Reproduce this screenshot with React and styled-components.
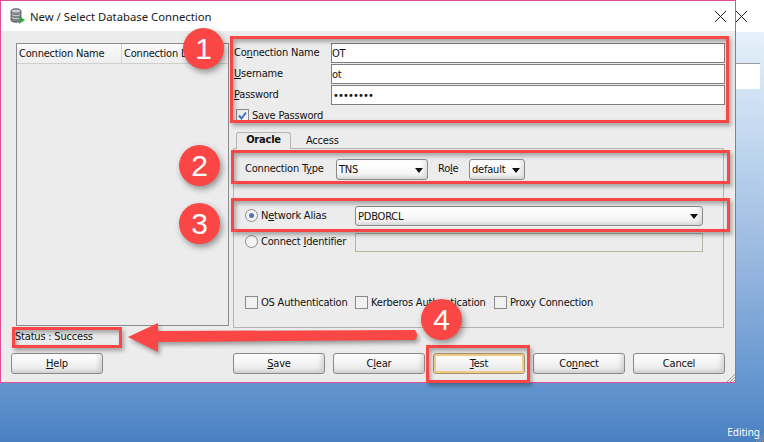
import React from "react";
import styled, { createGlobalStyle } from "styled-components";
import { X } from "lucide-react";

const GlobalStyle = createGlobalStyle`
  html, body {
    margin: 0;
    padding: 0;
    overflow: hidden;
  }
  * {
    box-sizing: border-box;
  }
  u {
    text-underline-offset: 1px;
    text-decoration-thickness: 1px;
  }
`;

const Desktop = styled.div`
  position: relative;
  width: 764px;
  height: 442px;
  display: flex;
  flex-direction: column;
  overflow: hidden;
  font-family: "DejaVu Sans Condensed", "Liberation Sans", sans-serif;
  font-size: 11px;
  letter-spacing: -0.2px;
  color: #111;
  background: linear-gradient(180deg, #e6f1fb 30px, #c5daf0 130px, #9ab9e0 255px, #6495cf 383px, #4a80c2 442px);
`;

const BackBar = styled.div`
  height: 32px;
  background: #fff;
  display: flex;
  justify-content: flex-end;
  align-items: center;
  padding-right: 12px;
`;

const BackField = styled.div`
  width: 25px;
  height: 26px;
  margin: 31px 4px 0 auto;
  background: #fff;
  border-top: 1px solid #9a9a9a;
`;

const EditingText = styled.div`
  margin-top: auto;
  align-self: flex-end;
  padding: 0 4px 2px 0;
  color: #fff;
  font-family: "Noto Sans", sans-serif;
  font-size: 10px;
  letter-spacing: 0;
  line-height: 16px;
`;

const Dialog = styled.div`
  position: absolute;
  left: 0;
  top: 0;
  width: 736px;
  height: 383px;
  display: flex;
  flex-direction: column;
  background: #ececec;
  border: 1px solid #de4f98;
`;

const TitleBar = styled.div`
  height: 30px;
  flex: none;
  display: flex;
  align-items: center;
  gap: 4px;
  padding: 0 4px 0 9px;
  background: #fff;
  font-family: "Noto Sans", sans-serif;
  font-size: 11.3px;
  letter-spacing: 0;
  color: #1a1a1a;
`;

const TitleText = styled.span`
  flex: 1;
`;

const Main = styled.div`
  display: grid;
  grid-template-columns: 213px 491px;
  gap: 4px;
  height: 296px;
  flex: none;
  padding: 12px 0 0 15px;
`;

const ConnTable = styled.div`
  border: 1px solid #8c8c8c;
  height: 283px;
`;

const TableHead = styled.div`
  display: grid;
  grid-template-columns: 105px 1fr;
  height: 20px;
  background: linear-gradient(180deg, #fafafa, #eeeeee);
  border-bottom: 1px solid #cfcfcf;
`;

const HeadCell = styled.div`
  padding-left: 2px;
  line-height: 20px;
  white-space: nowrap;
  overflow: hidden;
  border-right: ${(p) => (p.$last ? "none" : "1px solid #cfcfcf")};
`;

const RightCol = styled.div`
  display: flex;
  flex-direction: column;
`;

const FormGrid = styled.div`
  display: grid;
  grid-template-columns: 97px 394px;
  grid-auto-rows: 20px;
  row-gap: 1px;
  align-items: center;
  padding-left: 1px;
`;

const FieldLabel = styled.span`
  margin-top: -2px;
  white-space: nowrap;
`;

const FieldInput = styled.input`
  width: 100%;
  height: 20px;
  padding: 0;
  margin: 0;
  border: 1px solid #7f7f7f;
  background: #fff;
  outline: none;
  font: inherit;
  letter-spacing: inherit;
  color: #111;
`;

const PasswordInput = styled(FieldInput)`
  padding-left: 1px;
  letter-spacing: -0.85px;
`;

const CheckRow = styled.label`
  display: flex;
  align-items: center;
  gap: 3px;
  white-space: nowrap;
`;

const SaveRow = styled(CheckRow)`
  margin: 4px 0 0 3px;
  height: 13px;
`;

const CheckBox = styled.span`
  width: 13px;
  height: 13px;
  flex: none;
  display: flex;
  align-items: center;
  justify-content: center;
  border: 1px solid #8a8a8a;
  background: ${(p) => (p.$checked ? "linear-gradient(135deg, #e6e6e6, #fafafa)" : "#f1f1f1")};
`;

const TabStrip = styled.div`
  display: flex;
  align-items: flex-end;
  height: 17px;
  margin-top: 9px;
  padding-left: 3px;
`;

const Tab = styled.div`
  height: ${(p) => (p.$active ? "17px" : "14px")};
  width: ${(p) => (p.$active ? "55px" : "auto")};
  margin-left: ${(p) => (p.$active ? "0" : "15px")};
  margin-bottom: ${(p) => (p.$active ? "-1px" : "0")};
  text-align: center;
  font-weight: ${(p) => (p.$active ? 700 : 400)};
  line-height: ${(p) => (p.$active ? "13px" : "14px")};
  background: #ececec;
  border: ${(p) => (p.$active ? "1px solid #b5b5ad" : "none")};
  border-bottom: none;
  border-radius: 3px 3px 0 0;
  z-index: 1;
`;

const Panel = styled.div`
  height: 180px;
  display: flex;
  flex-direction: column;
  padding: 10px 0 0 11px;
  border: 1px solid #b5b5ad;
`;

const TypeRow = styled.div`
  display: flex;
  align-items: center;
  height: 21px;
`;

const RowLabel = styled.span`
  white-space: nowrap;
  width: ${(p) => p.$w}px;
  margin-left: ${(p) => p.$ml || 0}px;
  margin-top: -2px;
  flex: none;
`;

const Select = styled.div`
  position: relative;
  display: flex;
  align-items: center;
  width: ${(p) => p.$w}px;
  height: ${(p) => p.$h || 21}px;
  flex: none;
  padding-left: 2px;
  border: 1px solid #8a8a8a;
  border-radius: 3px;
  background: linear-gradient(180deg, #ffffff, #f8f8f8 60%, #ececec);
  box-shadow: inset -3px -2px 4px rgba(0, 0, 0, 0.1);

  &::after {
    content: "";
    position: absolute;
    right: 4px;
    top: 50%;
    margin-top: -2px;
    border-left: 4px solid transparent;
    border-right: 4px solid transparent;
    border-top: 5px solid #111;
  }
`;

const RadioRow = styled.div`
  display: flex;
  align-items: center;
  height: ${(p) => p.$h}px;
  margin-top: ${(p) => p.$mt}px;
`;

const Radio = styled.span`
  width: 13px;
  height: 13px;
  flex: none;
  margin-right: 3px;
  margin-top: -2px;
  display: flex;
  align-items: center;
  justify-content: center;
  border: 1px solid #8a8a8a;
  border-radius: 50%;
  background: #f4f4f4;

  &::after {
    content: "";
    display: ${(p) => (p.$on ? "block" : "none")};
    width: 5px;
    height: 5px;
    border-radius: 50%;
    background: #4a73c4;
  }
`;

const DisabledField = styled.div`
  width: 348px;
  height: 19px;
  flex: none;
  border: 1px solid #b5b5a0;
  background: #ececec;
`;

const AuthRow = styled.div`
  display: flex;
  align-items: center;
  height: 14px;
  margin-top: 43px;
`;

const AuthItem = styled(CheckRow)`
  width: ${(p) => p.$w}px;
  flex: none;
`;

const StatusRow = styled.div`
  height: 26px;
  flex: none;
  padding: 3px 0 0 14px;
  line-height: 14px;
`;

const Footer = styled.div`
  display: flex;
  padding-left: 10px;
`;

const Button = styled.button`
  width: 92px;
  height: 21px;
  margin: 0 8px 0 0;
  margin-left: ${(p) => p.$ml || 0}px;
  padding: 0;
  font: inherit;
  letter-spacing: inherit;
  color: #111;
  border: 1px solid ${(p) => (p.$focus ? "#a8946c" : "#8a8a8a")};
  border-radius: 3px;
  background: linear-gradient(180deg, #ffffff, #f3f3f3 50%, #e6e6e6);
  box-shadow: ${(p) =>
    p.$focus
      ? "inset 0 0 0 2px #efcb85"
      : "inset -3px -2px 4px rgba(0, 0, 0, 0.12)"};
`;

const Grip = styled.svg`
  position: absolute;
  right: 0;
  bottom: 0;
`;

const RedBox = styled.div`
  position: absolute;
  left: ${(p) => p.$x}px;
  top: ${(p) => p.$y}px;
  width: ${(p) => p.$w}px;
  height: ${(p) => p.$h}px;
  border: 3px solid #fb4646;
  box-shadow: 2px 3px 4px rgba(0, 0, 0, 0.3), inset 2px 3px 4px rgba(0, 0, 0, 0.3);
  pointer-events: none;
`;

const Badge = styled.div`
  position: absolute;
  left: ${(p) => p.$x}px;
  top: ${(p) => p.$y}px;
  width: 41px;
  height: 41px;
  display: flex;
  align-items: center;
  justify-content: center;
  border-radius: 50%;
  background: #fb4646;
  box-shadow: 2px 3px 6px rgba(0, 0, 0, 0.4);
  color: #fff;
  font-family: "Liberation Sans", Arial, sans-serif;
  font-size: 30px;
  letter-spacing: 0;
`;

const ArrowSvg = styled.svg`
  position: absolute;
  left: 120px;
  top: 315px;
  filter: drop-shadow(2px 3px 2px rgba(0, 0, 0, 0.35));
`;

const DbIcon = () => (
  <svg width="16" height="16" viewBox="0 0 16 16">
    <path d="M1 3c0-3 10-3 10 0v9c0 3-10 3-10 0z" fill="#7d8289" stroke="#3e434a" strokeWidth="0.8" />
    <ellipse cx="6" cy="3" rx="4.4" ry="1.6" fill="#c9ccd1" />
    <path d="M1.5 6.5c1.5 1.6 7.5 1.6 9 0M1.5 9.5c1.5 1.6 7.5 1.6 9 0" fill="none" stroke="#d7d9dc" strokeWidth="0.9" />
    <path d="M9 8l6 4-6 4z" fill="#35a93a" />
  </svg>
);

const GripLines = () => (
  <Grip width="8" height="8" viewBox="0 0 8 8">
    <path d="M8 0L0 8M8 3L3 8M8 6L6 8" stroke="#9a9a9a" strokeWidth="1" />
  </Grip>
);

const CheckMark = () => (
  <svg width="11" height="11" viewBox="0 0 11 11">
    <path d="M2 5.5L4.5 8.5L9 2.5" fill="none" stroke="#3f6fc0" strokeWidth="2" />
  </svg>
);

const footerButtons = [
  { key: "save", label: <><u>S</u>ave</>, ml: 122 },
  { key: "clear", label: <>C<u>l</u>ear</> },
  { key: "test", label: <><u>T</u>est</>, focus: true },
  { key: "connect", label: <>Co<u>n</u>nect</> },
  { key: "cancel", label: "Cancel" },
];

const App = () => {
  return (
    <Desktop>
      <GlobalStyle />
      <BackBar>
        <X size={21} strokeWidth={1.1} color="#111" />
      </BackBar>
      <BackField />
      <EditingText>Editing</EditingText>
      <GripLines />

      <Dialog>
        <TitleBar>
          <DbIcon />
          <TitleText>New / Select Database Connection</TitleText>
          <X size={21} strokeWidth={1.1} color="#111" />
        </TitleBar>

        <Main>
          <ConnTable>
            <TableHead>
              <HeadCell>Connection Name</HeadCell>
              <HeadCell $last>Connection Details</HeadCell>
            </TableHead>
          </ConnTable>

          <RightCol>
            <FormGrid>
              <FieldLabel>Co<u>n</u>nection Name</FieldLabel>
              <FieldInput readOnly value="OT" />
              <FieldLabel><u>U</u>sername</FieldLabel>
              <FieldInput readOnly value="ot" />
              <FieldLabel><u>P</u>assword</FieldLabel>
              <PasswordInput readOnly type="password" value="password" />
            </FormGrid>
            <SaveRow>
              <CheckBox $checked><CheckMark /></CheckBox>
              <span>Sa<u>v</u>e Password</span>
            </SaveRow>

            <TabStrip>
              <Tab $active>Oracle</Tab>
              <Tab>Access</Tab>
            </TabStrip>
            <Panel>
              <TypeRow>
                <RowLabel $w={91}>Connection T<u>y</u>pe</RowLabel>
                <Select $w={92}>TNS</Select>
                <RowLabel $w={31} $ml={10}>Ro<u>l</u>e</RowLabel>
                <Select $w={56}>default</Select>
              </TypeRow>
              <RadioRow $h={20} $mt={26}>
                <Radio $on />
                <RowLabel $w={94}>N<u>e</u>twork Alias</RowLabel>
                <Select $w={348} $h={20}>PDBORCL</Select>
              </RadioRow>
              <RadioRow $h={19} $mt={7}>
                <Radio />
                <RowLabel $w={94}>Connect <u>I</u>dentifier</RowLabel>
                <DisabledField />
              </RadioRow>
              <AuthRow>
                <AuthItem $w={110}>
                  <CheckBox />
                  <span>OS Authentication</span>
                </AuthItem>
                <AuthItem $w={139}>
                  <CheckBox />
                  <span>Kerberos Authentication</span>
                </AuthItem>
                <AuthItem $w={110}>
                  <CheckBox />
                  <span>Proxy Connection</span>
                </AuthItem>
              </AuthRow>
            </Panel>
          </RightCol>
        </Main>

        <StatusRow>Status : Success</StatusRow>

        <Footer>
          <Button><u>H</u>elp</Button>
          {footerButtons.map((b) => (
            <Button key={b.key} $ml={b.ml} $focus={b.focus}>{b.label}</Button>
          ))}
        </Footer>
        <GripLines />
      </Dialog>

      <RedBox $x={230} $y={36} $w={499} $h={87} />
      <RedBox $x={231} $y={150} $w={499} $h={34} />
      <RedBox $x={231} $y={198} $w={499} $h={34} />
      <RedBox $x={12} $y={327} $w={110} $h={21} />
      <RedBox $x={426} $y={345} $w={104} $h={38} />

      <ArrowSvg width="300" height="45" viewBox="0 0 300 45">
        <path d="M8 22L38 8V16L295 15Q299 20 295 25L38 27V37Z" fill="#fb4646" />
      </ArrowSvg>

      <Badge $x={183} $y={28}>1</Badge>
      <Badge $x={179} $y={145}>2</Badge>
      <Badge $x={179} $y={203}>3</Badge>
      <Badge $x={421} $y={299}>4</Badge>
    </Desktop>
  );
};

export default App;
